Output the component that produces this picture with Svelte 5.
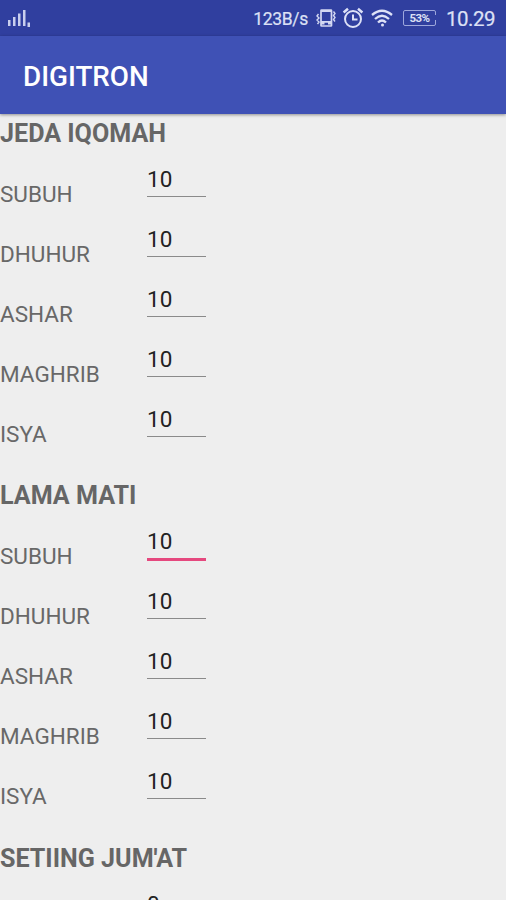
<script>
  const prayers = ['SUBUH', 'DHUHUR', 'ASHAR', 'MAGHRIB', 'ISYA'];
  const sections = [
    { title: 'JEDA IQOMAH', focused: -1 },
    { title: 'LAMA MATI', focused: 0 }
  ];
</script>

<div class="screen">
  <header class="status">
    <svg class="signal" width="24" height="18" viewBox="0 0 24 18" fill="#c9cfee">
      <path d="M0 11h2.500v6H0zM5 8h2.500v9H5zM10 4.500h2.500V17H10zM15 1h2.500v16H15zM19.500 13.500H22V18h-2.500z" />
    </svg>
    <span class="speed">123B/s</span>
    <svg class="vibrate" width="20" height="20" viewBox="0 0 20 20" fill="none" stroke="#d3d8f2" stroke-width="1.700">
      <rect x="5" y="2" width="10.500" height="16" rx="0.500" />
      <path d="M5 3h10.500M5 15.700h3.500M12 15.700h3.500M5 13.800h10.500" stroke-width="1.800" />
      <path d="M2.500 6l-1.500 2 2 2-2 2 2 2-1.500 2M17.500 3.500l1.500 2-1.500 2 1.500 2-1.500 2 1.500 2" stroke-width="1.400" />
    </svg>
    <svg class="alarm" width="22" height="22" viewBox="0 0 22 22" fill="none" stroke="#dde1f7" stroke-width="2">
      <circle cx="11" cy="12" r="8" />
      <path d="M11 7.500V12.500h4.500" />
      <path d="M1.600 5.500L6 1.800M20.400 5.500L16 1.800" stroke-width="2.500" />
    </svg>
    <svg class="wifi" width="22" height="18" viewBox="0 0 22 18" fill="none" stroke="#dde1f7" stroke-width="2.300">
      <path d="M1 6Q11-2.500 21 6M4 10Q11 3.500 18 10M7 13.500Q11 9.500 15 13.500" />
      <circle cx="11.500" cy="16" r="1.500" fill="#dde1f7" stroke="none" />
    </svg>
    <div class="battery"><span>53%</span></div>
    <span class="clock">10.29</span>
  </header>
  <div class="appbar"><h1>DIGITRON</h1></div>
  <main>
    {#each sections as section}
      <section>
        <h2>{section.title}</h2>
        {#each prayers as prayer, i}
          <div class="row">
            <span class="label">{prayer}</span>
            <span class="field" class:focused={i === section.focused}>10</span>
          </div>
        {/each}
      </section>
    {/each}
    <section>
      <h2>SETIING JUM'AT</h2>
      <div class="row"><span class="label"></span><span class="field">0</span></div>
    </section>
  </main>
</div>

<style>
  :global(body) { margin: 0; }
  .screen {
    width: 506px;
    height: 900px;
    overflow: hidden;
    display: flex;
    flex-direction: column;
    background: #eee;
    font-family: Roboto, "Liberation Sans", sans-serif;
  }
  .status {
    flex: none;
    height: 36px;
    box-sizing: border-box;
    display: flex;
    align-items: center;
    padding: 0 11px 0 8px;
    background: #303f9f;
    color: #dde1f5;
  }
  .signal { margin-right: auto; }
  .speed {
    font-size: 17.5px;
    letter-spacing: -0.3px;
    margin-right: 8px;
    padding-top: 2px;
    -webkit-text-stroke: 0.2px currentColor;
  }
  .vibrate { margin-right: 6px; }
  .alarm { margin-right: 7px; }
  .wifi { margin-right: 10px; }
  .battery {
    position: relative;
    width: 33px;
    height: 16px;
    box-sizing: border-box;
    border: 1.5px solid #9da7dc;
    border-radius: 2px;
    margin-right: 10px;
    display: flex;
    align-items: center;
    justify-content: center;
    font-size: 11.5px;
    font-weight: 700;
    letter-spacing: -0.5px;
  }
  .battery::after {
    content: "";
    position: absolute;
    right: -1px;
    top: 4px;
    width: 2px;
    height: 5px;
    background: #303f9f;
  }
  .clock {
    font-size: 20.5px;
    letter-spacing: -0.5px;
    padding-top: 2px;
    -webkit-text-stroke: 0.2px currentColor;
  }
  .appbar {
    flex: none;
    height: 78px;
    display: flex;
    align-items: center;
    padding: 2px 0 0 23px;
    box-sizing: border-box;
    background: #3f51b5;
    box-shadow: 0 1px 3px rgba(0, 0, 0, 0.4);
    position: relative;
  }
  h1 { margin: 0; font-size: 27.8px; font-weight: 500; color: #fff; }
  main { flex: 1; min-height: 0; overflow: hidden; }
  section { height: 362.3px; }
  h2 {
    margin: 0;
    height: 40px;
    line-height: 39px;
    font-size: 25.1px;
    font-weight: 700;
    color: #666;
    white-space: nowrap;
  }
  .row { height: 60px; display: flex; align-items: flex-start; }
  .label {
    width: 147px;
    line-height: 26px;
    padding-top: 27px;
    font-size: 22.5px;
    color: #686868;
  }
  .field {
    width: 59px;
    height: 43px;
    box-sizing: border-box;
    padding-top: 12px;
    line-height: 26px;
    font-size: 22.5px;
    color: #222;
    border-bottom: 1px solid #8a8a8a;
  }
  .focused { height: 45px; border-bottom: 3px solid #e5487e; }
</style>
